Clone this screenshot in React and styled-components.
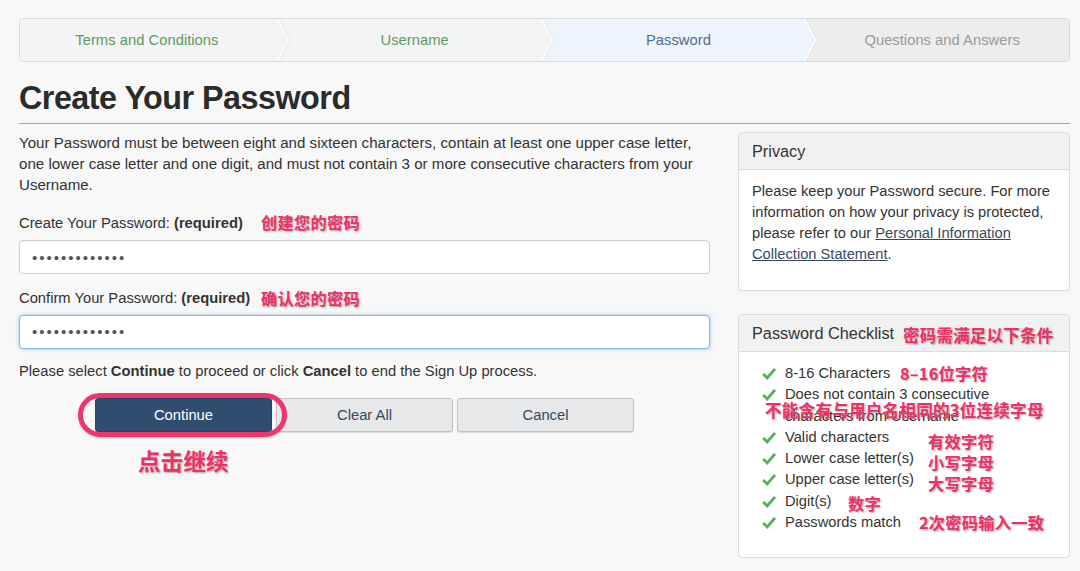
import React from 'react';
import styled, { createGlobalStyle } from 'styled-components';

const GlobalStyle = createGlobalStyle`
  html, body { margin: 0; padding: 0; background: #f8f8f8; }
  body {
    font-family: "Liberation Sans", Arial, sans-serif;
    font-size: 14.75px;
    color: #333;
  }
  * { box-sizing: border-box; }
`;

const PINK = '#ef2f68';

const Page = styled.div`
  width: 1051px;
  margin-left: 19px;
  padding-top: 18px;
`;

const Steps = styled.nav`
  display: flex;
  height: 44px;
  border: 1px solid #dadada;
  border-radius: 4px;
  overflow: hidden;
`;

const stepTones = {
  done: { bg: '#f3f4f5', fg: '#5f9a5f' },
  active: { bg: '#eef4fb', fg: '#4f6c8c' },
  todo: { bg: '#ededed', fg: '#9a9a9a' },
};

const Step = styled.div`
  position: relative;
  flex: 1;
  display: flex;
  align-items: center;
  justify-content: center;
  padding: ${p => (p.$first ? '0 4px 0 0' : '0 0 0 10px')};
  background: ${p => stepTones[p.$tone].bg};
  color: ${p => stepTones[p.$tone].fg};
  font-size: 14.8px;
`;

const Chevron = styled.svg`
  position: absolute;
  top: 0;
  right: -12px;
  width: 13px;
  height: 100%;
  z-index: 1;
`;

const Title = styled.h1`
  margin: 19px 0 0;
  padding-bottom: 8px;
  font-size: 32.3px;
  letter-spacing: -0.5px;
  line-height: 34px;
  font-weight: 700;
  color: #2b2b2b;
  border-bottom: 1px solid #c9958e;
`;

const Columns = styled.div`
  display: grid;
  grid-template-columns: 691px 332px;
  gap: 28px;
  margin-top: 8px;
  align-items: start;
`;

const Main = styled.section`
  display: flex;
  flex-direction: column;
`;

const Intro = styled.p`
  margin: 0;
  font-size: 15.1px;
  line-height: 21px;
`;

const Field = styled.div`
  margin-top: ${p => p.$gap}px;
`;

const Label = styled.label`
  position: relative;
  display: block;
  line-height: 21px;
  margin-bottom: 6px;
  b { font-weight: 700; }
`;

const Note = styled.span`
  position: absolute;
  left: ${p => p.$left}px;
  top: ${p => p.$top}px;
  white-space: nowrap;
  font-family: "Noto Sans CJK SC", sans-serif;
  font-weight: 700;
  font-size: ${p => p.$size || 16.3}px;
  line-height: 21px;
  letter-spacing: 0.2px;
  color: ${PINK};
  text-shadow: 1px 1px 2px rgba(0, 0, 0, 0.35), 0 0 1px #fff;
  z-index: 2;
`;

const InlineNote = styled.span`
  margin-left: 9px;
  margin-top: 3px;
  white-space: nowrap;
  font-family: "Noto Sans CJK SC", sans-serif;
  font-weight: 700;
  font-size: 16.5px;
  letter-spacing: 0.2px;
  color: ${PINK};
  text-shadow: 1px 1px 2px rgba(0, 0, 0, 0.35), 0 0 1px #fff;
`;

const PasswordInput = styled.input`
  display: block;
  width: 100%;
  height: 34px;
  padding: 0 12px;
  background: #fff;
  border: 1px solid ${p => (p.$focused ? '#80b3e6' : '#cfcfcf')};
  border-radius: 4px;
  box-shadow: ${p => (p.$focused ? '0 0 4px rgba(82, 155, 225, 0.5)' : 'inset 0 1px 1px rgba(0,0,0,0.04)')};
  font-family: "Liberation Sans", Arial, sans-serif;
  font-size: 15px;
  letter-spacing: 2px;
  color: #555;
  outline: none;
`;

const Prompt = styled.p`
  margin: 12.5px 0 0;
  line-height: 21px;
  b { font-weight: 700; }
`;

const Buttons = styled.div`
  display: flex;
  justify-content: center;
  gap: 4px;
  margin-top: 16px;
`;

const ButtonSlot = styled.div`
  position: relative;
`;

const Button = styled.button`
  display: block;
  width: 177px;
  height: 34px;
  border-radius: 3px;
  font-family: "Liberation Sans", Arial, sans-serif;
  font-size: 14.75px;
  cursor: pointer;
  background: ${p => (p.$primary ? '#2f4d6e' : '#e7e8ea')};
  color: ${p => (p.$primary ? '#fff' : '#34475f')};
  border: 1px solid ${p => (p.$primary ? '#2a4563' : '#c2c2c2')};
  box-shadow: 0 1px 1px rgba(0, 0, 0, 0.12);
`;

const Ring = styled.span`
  position: absolute;
  top: -5px;
  bottom: -5px;
  left: -17px;
  right: -15px;
  border: 5px solid #f0356c;
  border-radius: 22px;
  box-shadow: 0 1px 2px rgba(0, 0, 0, 0.2);
  pointer-events: none;
  z-index: 3;
`;

const Side = styled.aside`
  display: flex;
  flex-direction: column;
  gap: 23px;
`;

const Panel = styled.div`
  background: #fff;
  border: 1px solid #dcdcdc;
  border-radius: 4px;
  box-shadow: 0 1px 1px rgba(0, 0, 0, 0.04);
`;

const PanelHeading = styled.div`
  display: flex;
  align-items: center;
  height: 37px;
  padding: 0 13px;
  background: #f1f1f1;
  border-bottom: 1px solid #dcdcdc;
  border-radius: 4px 4px 0 0;
  font-size: 16.3px;
  color: #333;
`;

const PanelBody = styled.div`
  padding: ${p => p.$pad};
  line-height: ${p => p.$lh}px;
  font-size: 14.7px;
`;

const Link = styled.a`
  color: #3a4a5e;
  text-decoration: underline;
`;

const Checklist = styled.ul`
  list-style: none;
  margin: 0;
  padding: 0 0 0 10px;
`;

const Item = styled.li`
  position: relative;
  display: flex;
  align-items: flex-start;
  gap: 9px;
  color: #333;
`;

const Tick = styled.svg`
  flex: none;
  width: 14px;
  height: 21.3px;
`;

const Check = () => (
  <Tick viewBox="0 0 14 21.3">
    <path d="M1.2 11 L5.2 15 L13 6" fill="none" stroke="#5fae5f" strokeWidth="2.9" strokeLinejoin="miter" />
  </Tick>
);

const steps = [
  { label: 'Terms and Conditions', tone: 'done' },
  { label: 'Username', tone: 'done' },
  { label: 'Password', tone: 'active' },
  { label: 'Questions and Answers', tone: 'todo' },
];

const checks = [
  { text: '8-16 Characters', note: '8–16位字符', left: 138, top: 0 },
  { text: 'Does not contain 3 consecutive characters from Username', note: '不能含有与用户名相同的3位连续字母', left: 3, top: 16, size: 16.6 },
  { text: 'Valid characters', note: '有效字符', left: 166, top: 4 },
  { text: 'Lower case letter(s)', note: '小写字母', left: 166, top: 4 },
  { text: 'Upper case letter(s)', note: '大写字母', left: 166, top: 4 },
  { text: 'Digit(s)', note: '数字', left: 86, top: 2 },
  { text: 'Passwords match', note: '2次密码输入一致', left: 157, top: 0 },
];

export default function App() {
  return (
    <>
      <GlobalStyle />
      <Page>
        <Steps>
          {steps.map((s, i) => (
            <Step key={s.label} $tone={s.tone} $first={i === 0}>
              {s.label}
              {i < steps.length - 1 && (
                <Chevron viewBox="0 0 13 44" preserveAspectRatio="none">
                  <polygon points="0,0 11,22 0,44" fill={stepTones[s.tone].bg} />
                  <polyline points="1.5,-1 12.5,22 1.5,45" fill="none" stroke="#d6d6d6" strokeWidth="1" />
                  <polyline points="0.5,-1 11.5,22 0.5,45" fill="none" stroke="#ffffff" strokeWidth="1.6" />
                </Chevron>
              )}
            </Step>
          ))}
        </Steps>

        <Title>Create Your Password</Title>

        <Columns>
          <Main>
            <Intro>
              Your Password must be between eight and sixteen characters, contain at least one upper case letter,<br />
              one lower case letter and one digit, and must not contain 3 or more consecutive characters from your<br />
              Username.
            </Intro>

            <Field $gap={18}>
              <Label>
                Create Your Password: <b>(required)</b>
                <Note $left={242} $top={-1}>创建您的密码</Note>
              </Label>
              <PasswordInput type="password" readOnly value="aaaaaaaaaaaaa" />
            </Field>

            <Field $gap={13.5}>
              <Label>
                Confirm Your Password: <b>(required)</b>
                <Note $left={242} $top={0}>确认您的密码</Note>
              </Label>
              <PasswordInput type="password" readOnly value="aaaaaaaaaaaaa" $focused />
            </Field>

            <Prompt>
              Please select <b>Continue</b> to proceed or click <b>Cancel</b> to end the Sign Up process.
            </Prompt>

            <Buttons>
              <ButtonSlot>
                <Button $primary>Continue</Button>
                <Ring />
                <Note $left={43} $top={52} $size={22.5}>点击继续</Note>
              </ButtonSlot>
              <ButtonSlot>
                <Button>Clear All</Button>
              </ButtonSlot>
              <ButtonSlot>
                <Button>Cancel</Button>
              </ButtonSlot>
            </Buttons>
          </Main>

          <Side>
            <Panel>
              <PanelHeading>Privacy</PanelHeading>
              <PanelBody $pad="11px 13px 25px" $lh={21}>
                Please keep your Password secure. For more information on how your privacy is protected,
                please refer to our <Link href="#">Personal Information Collection Statement</Link>.
              </PanelBody>
            </Panel>

            <Panel>
              <PanelHeading>
                Password Checklist
                <InlineNote>密码需满足以下条件</InlineNote>
              </PanelHeading>
              <PanelBody $pad="11px 13px 24px" $lh={21.3}>
                <Checklist>
                  {checks.map(c => (
                    <Item key={c.text}>
                      <Check />
                      <span>{c.text}</span>
                      <Note $left={c.left} $top={c.top} $size={c.size}>{c.note}</Note>
                    </Item>
                  ))}
                </Checklist>
              </PanelBody>
            </Panel>
          </Side>
        </Columns>
      </Page>
    </>
  );
}
